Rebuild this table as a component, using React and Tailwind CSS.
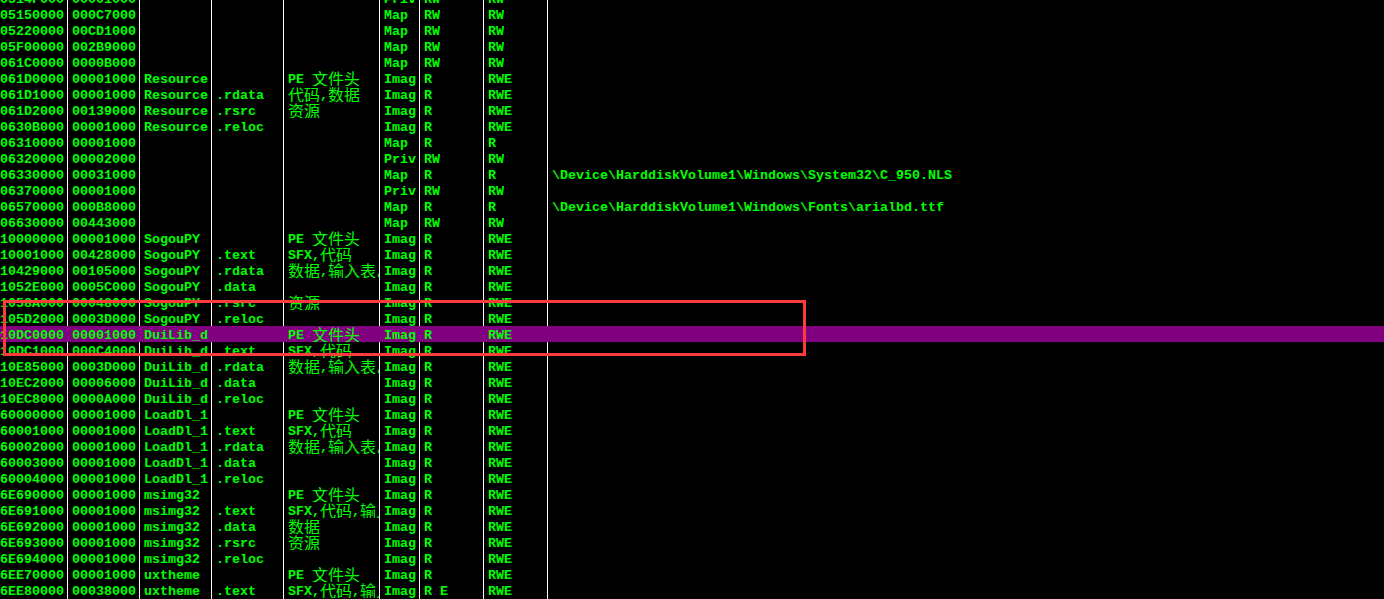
import React from 'react';

// Memory map rows: address, size, owner, section, contains, type, access, initial, mapped as
const ROWS = [
  ['0514F000', '00001000', '', '', '', 'Priv', 'RW', 'RW', ''],
  ['05150000', '000C7000', '', '', '', 'Map', 'RW', 'RW', ''],
  ['05220000', '00CD1000', '', '', '', 'Map', 'RW', 'RW', ''],
  ['05F00000', '002B9000', '', '', '', 'Map', 'RW', 'RW', ''],
  ['061C0000', '0000B000', '', '', '', 'Map', 'RW', 'RW', ''],
  ['061D0000', '00001000', 'Resource', '', 'PE 文件头', 'Imag', 'R', 'RWE', ''],
  ['061D1000', '00001000', 'Resource', '.rdata', '代码,数据', 'Imag', 'R', 'RWE', ''],
  ['061D2000', '00139000', 'Resource', '.rsrc', '资源', 'Imag', 'R', 'RWE', ''],
  ['0630B000', '00001000', 'Resource', '.reloc', '', 'Imag', 'R', 'RWE', ''],
  ['06310000', '00001000', '', '', '', 'Map', 'R', 'R', ''],
  ['06320000', '00002000', '', '', '', 'Priv', 'RW', 'RW', ''],
  ['06330000', '00031000', '', '', '', 'Map', 'R', 'R', '\\Device\\HarddiskVolume1\\Windows\\System32\\C_950.NLS'],
  ['06370000', '00001000', '', '', '', 'Priv', 'RW', 'RW', ''],
  ['06570000', '000B8000', '', '', '', 'Map', 'R', 'R', '\\Device\\HarddiskVolume1\\Windows\\Fonts\\arialbd.ttf'],
  ['06630000', '00443000', '', '', '', 'Map', 'RW', 'RW', ''],
  ['10000000', '00001000', 'SogouPY', '', 'PE 文件头', 'Imag', 'R', 'RWE', ''],
  ['10001000', '00428000', 'SogouPY', '.text', 'SFX,代码', 'Imag', 'R', 'RWE', ''],
  ['10429000', '00105000', 'SogouPY', '.rdata', '数据,输入表,输出表', 'Imag', 'R', 'RWE', ''],
  ['1052E000', '0005C000', 'SogouPY', '.data', '', 'Imag', 'R', 'RWE', ''],
  ['1058A000', '00048000', 'SogouPY', '.rsrc', '资源', 'Imag', 'R', 'RWE', ''],
  ['105D2000', '0003D000', 'SogouPY', '.reloc', '', 'Imag', 'R', 'RWE', ''],
  ['10DC0000', '00001000', 'DuiLib_d', '', 'PE 文件头', 'Imag', 'R', 'RWE', '', true],
  ['10DC1000', '000C4000', 'DuiLib_d', '.text', 'SFX,代码', 'Imag', 'R', 'RWE', ''],
  ['10E85000', '0003D000', 'DuiLib_d', '.rdata', '数据,输入表,输出表', 'Imag', 'R', 'RWE', ''],
  ['10EC2000', '00006000', 'DuiLib_d', '.data', '', 'Imag', 'R', 'RWE', ''],
  ['10EC8000', '0000A000', 'DuiLib_d', '.reloc', '', 'Imag', 'R', 'RWE', ''],
  ['60000000', '00001000', 'LoadDl_1', '', 'PE 文件头', 'Imag', 'R', 'RWE', ''],
  ['60001000', '00001000', 'LoadDl_1', '.text', 'SFX,代码', 'Imag', 'R', 'RWE', ''],
  ['60002000', '00001000', 'LoadDl_1', '.rdata', '数据,输入表,输出表', 'Imag', 'R', 'RWE', ''],
  ['60003000', '00001000', 'LoadDl_1', '.data', '', 'Imag', 'R', 'RWE', ''],
  ['60004000', '00001000', 'LoadDl_1', '.reloc', '', 'Imag', 'R', 'RWE', ''],
  ['6E690000', '00001000', 'msimg32', '', 'PE 文件头', 'Imag', 'R', 'RWE', ''],
  ['6E691000', '00001000', 'msimg32', '.text', 'SFX,代码,输入表', 'Imag', 'R', 'RWE', ''],
  ['6E692000', '00001000', 'msimg32', '.data', '数据', 'Imag', 'R', 'RWE', ''],
  ['6E693000', '00001000', 'msimg32', '.rsrc', '资源', 'Imag', 'R', 'RWE', ''],
  ['6E694000', '00001000', 'msimg32', '.reloc', '', 'Imag', 'R', 'RWE', ''],
  ['6EE70000', '00001000', 'uxtheme', '', 'PE 文件头', 'Imag', 'R', 'RWE', ''],
  ['6EE80000', '00038000', 'uxtheme', '.text', 'SFX,代码,输入表', 'Imag', 'R E', 'RWE', ''],
  ['6EEB8000', '00001000', 'uxtheme', '.data', '数据', 'Imag', 'R', 'RWE', ''],
];

const COLS = [
  'w-[68px] pl-0 border-r',
  'w-[72px] pl-1 border-r',
  'w-[72px] pl-1 border-r',
  'w-[72px] pl-1 border-r',
  'w-[96px] pl-1 border-r',
  'w-[40px] pl-1 border-r',
  'w-[64px] pl-1 border-r',
  'w-[64px] pl-1 border-r',
  'flex-1 pl-1',
];

// ascii in the bold fixed font, CJK runs double width and sitting a bit low
const Text = ({ value }) =>
  value.split(/([\u3400-\u9fff]+)/).map((part, i) =>
    /[\u3400-\u9fff]/.test(part) ? (
      <span key={i} className="relative top-[2px] text-[16px] leading-[10px] font-normal">
        {part}
      </span>
    ) : (
      <span key={i}>{part}</span>
    )
  );

const Row = ({ cells, selected }) => (
  <div className={`flex h-4 shrink-0 ${selected ? 'bg-[#800080]' : ''}`}>
    {COLS.map((cls, i) => (
      <div
        key={i}
        className={`h-full shrink-0 overflow-hidden whitespace-nowrap leading-[20px] ${cls} ${
          selected ? 'border-transparent' : 'border-white'
        }`}
      >
        <Text value={cells[i]} />
      </div>
    ))}
  </div>
);

export default function App() {
  return (
    <div className="relative h-[599px] w-[1384px] overflow-hidden bg-black font-['Liberation_Mono','Noto_Sans_CJK_SC',monospace] text-[13.333px] font-bold text-[#00ff00]">
      <div className="-mt-[10px] flex flex-col">
        {ROWS.map((r, i) => (
          <Row key={i} cells={r} selected={r[9]} />
        ))}
      </div>
      {/* annotation box */}
      <div className="pointer-events-none absolute left-[3px] top-[300px] h-[56px] w-[803px] border-[3px] border-[#fd3b3b]" />
    </div>
  );
}
